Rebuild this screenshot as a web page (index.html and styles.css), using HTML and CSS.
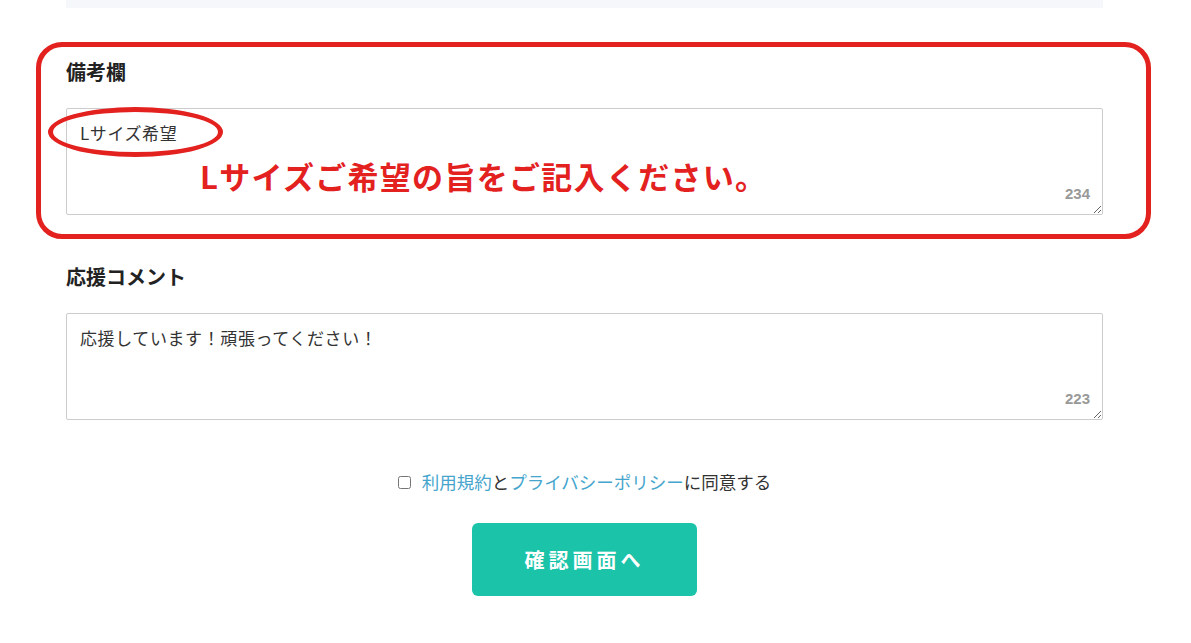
FILE: index.html
```html
<!DOCTYPE html>
<html lang="ja">
<head>
    <meta charset="UTF-8">
    <meta name="viewport" content="width=device-width, initial-scale=1.0">
    <title>備考欄</title>
    <link rel="stylesheet" href="styles.css">
</head>
<body>
    <div class="container">
        <div class="top-box"></div>

        <div class="field field-note">
            <div class="annot-frame"></div>
            <label class="field-label" for="note">備考欄</label>
            <div class="text-wrap">
                <textarea id="note" class="text-input">Lサイズ希望</textarea>
                <span class="counter">234</span>
                <div class="annot-ellipse"></div>
                <p class="annot-text">Lサイズご希望の旨をご記入ください。</p>
            </div>
        </div>

        <div class="field field-comment">
            <label class="field-label" for="comment">応援コメント</label>
            <div class="text-wrap">
                <textarea id="comment" class="text-input">応援しています！頑張ってください！</textarea>
                <span class="counter">223</span>
            </div>
        </div>

        <div class="agree">
            <input type="checkbox" id="agree">
            <label for="agree"><a href="#">利用規約</a>と<a href="#">プライバシーポリシー</a>に同意する</label>
        </div>

        <div class="actions">
            <button class="submit">確認画面へ</button>
        </div>
    </div>
</body>
</html>
```

FILE: styles.css
```css
body {
    margin: 0;
    font-family: "Noto Sans CJK JP", "Noto Sans", sans-serif;
    color: #333;
    background: #fff;
}
.container {
    width: 1037px;
    margin-left: 66px;
}
.top-box {
    height: 8px;
    background-color: #f6f7fa;
}
.field {
    position: relative;
    margin-top: 52px;
}
.field-comment {
    margin-top: 50px;
}
.field-label {
    display: block;
    font-size: 20px;
    font-weight: bold;
    line-height: 24px;
    margin-bottom: 24px;
    color: #222;
}
.text-wrap {
    position: relative;
}
.text-input {
    display: block;
    width: 100%;
    height: 107px;
    box-sizing: border-box;
    padding: 13px 13px;
    border: 1px solid #ccc;
    border-radius: 2px;
    font-family: "Noto Sans CJK JP", sans-serif;
    font-size: 17px;
    letter-spacing: 0.6px;
    line-height: 22px;
    color: #333;
    resize: vertical;
    outline: none;
}
.counter {
    position: absolute;
    right: 13px;
    bottom: 13px;
    font-family: "Liberation Sans", Arial, sans-serif;
    font-size: 15px;
    font-weight: bold;
    color: #999;
}
.annot-frame {
    position: absolute;
    left: -30px;
    top: -18px;
    width: 1115px;
    height: 197px;
    box-sizing: border-box;
    border: 5px solid #e3211f;
    border-radius: 26px;
    pointer-events: none;
}
.annot-ellipse {
    position: absolute;
    left: -18px;
    top: -1px;
    width: 175px;
    height: 50px;
    box-sizing: border-box;
    border: 5px solid #e3211f;
    border-radius: 50%;
    pointer-events: none;
}
.annot-text {
    position: absolute;
    left: 134px;
    top: 48px;
    margin: 0;
    font-size: 31px;
    font-weight: bold;
    letter-spacing: 1.3px;
    line-height: 40px;
    color: #e3211f;
}
.agree {
    display: flex;
    justify-content: center;
    align-items: center;
    margin-top: 50px;
    font-size: 17.5px;
    line-height: 24px;
}
.agree input {
    width: 13px;
    height: 13px;
    margin: 0 11px 0 0;
}
.agree a {
    color: #45a5cd;
    text-decoration: none;
}
.actions {
    display: flex;
    justify-content: center;
    margin-top: 29px;
}
.submit {
    width: 225px;
    height: 73px;
    border: none;
    border-radius: 6px;
    background-color: #1bc3a9;
    color: #fff;
    font-family: "Noto Sans CJK JP", sans-serif;
    font-size: 20px;
    font-weight: bold;
    letter-spacing: 4px;
    cursor: pointer;
}
```
